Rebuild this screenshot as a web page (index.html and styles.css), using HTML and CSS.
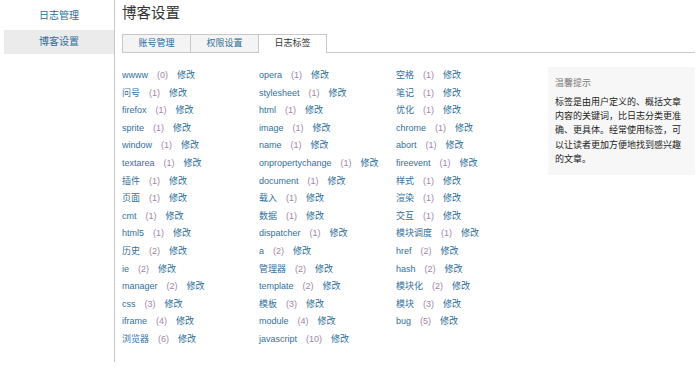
FILE: index.html
```html
<!DOCTYPE html>
<html lang="zh-CN">
<head>
  <meta charset="UTF-8" />
  <title>博客设置</title>
  <link rel="stylesheet" href="styles.css">
</head>
<body>
  <div class="page">
    <div class="side-nav">
      <a class="nav-item">日志管理</a>
      <a class="nav-item active">博客设置</a>
    </div>

    <div class="main">
      <h1 class="page-title">博客设置</h1>

      <div class="tabs">
        <a class="tab">账号管理</a>
        <a class="tab">权限设置</a>
        <a class="tab active">日志标签</a>
      </div>

      <div class="tag-panel">
        <ul class="tag-list">
          <li><span class="tag-name">wwww</span><span class="tag-count">(0)</span><a class="tag-edit">修改</a></li>
          <li><span class="tag-name">opera</span><span class="tag-count">(1)</span><a class="tag-edit">修改</a></li>
          <li><span class="tag-name">空格</span><span class="tag-count">(1)</span><a class="tag-edit">修改</a></li>
          <li><span class="tag-name">问号</span><span class="tag-count">(1)</span><a class="tag-edit">修改</a></li>
          <li><span class="tag-name">stylesheet</span><span class="tag-count">(1)</span><a class="tag-edit">修改</a></li>
          <li><span class="tag-name">笔记</span><span class="tag-count">(1)</span><a class="tag-edit">修改</a></li>
          <li><span class="tag-name">firefox</span><span class="tag-count">(1)</span><a class="tag-edit">修改</a></li>
          <li><span class="tag-name">html</span><span class="tag-count">(1)</span><a class="tag-edit">修改</a></li>
          <li><span class="tag-name">优化</span><span class="tag-count">(1)</span><a class="tag-edit">修改</a></li>
          <li><span class="tag-name">sprite</span><span class="tag-count">(1)</span><a class="tag-edit">修改</a></li>
          <li><span class="tag-name">image</span><span class="tag-count">(1)</span><a class="tag-edit">修改</a></li>
          <li><span class="tag-name">chrome</span><span class="tag-count">(1)</span><a class="tag-edit">修改</a></li>
          <li><span class="tag-name">window</span><span class="tag-count">(1)</span><a class="tag-edit">修改</a></li>
          <li><span class="tag-name">name</span><span class="tag-count">(1)</span><a class="tag-edit">修改</a></li>
          <li><span class="tag-name">abort</span><span class="tag-count">(1)</span><a class="tag-edit">修改</a></li>
          <li><span class="tag-name">textarea</span><span class="tag-count">(1)</span><a class="tag-edit">修改</a></li>
          <li><span class="tag-name">onpropertychange</span><span class="tag-count">(1)</span><a class="tag-edit">修改</a></li>
          <li><span class="tag-name">fireevent</span><span class="tag-count">(1)</span><a class="tag-edit">修改</a></li>
          <li><span class="tag-name">插件</span><span class="tag-count">(1)</span><a class="tag-edit">修改</a></li>
          <li><span class="tag-name">document</span><span class="tag-count">(1)</span><a class="tag-edit">修改</a></li>
          <li><span class="tag-name">样式</span><span class="tag-count">(1)</span><a class="tag-edit">修改</a></li>
          <li><span class="tag-name">页面</span><span class="tag-count">(1)</span><a class="tag-edit">修改</a></li>
          <li><span class="tag-name">载入</span><span class="tag-count">(1)</span><a class="tag-edit">修改</a></li>
          <li><span class="tag-name">渲染</span><span class="tag-count">(1)</span><a class="tag-edit">修改</a></li>
          <li><span class="tag-name">cmt</span><span class="tag-count">(1)</span><a class="tag-edit">修改</a></li>
          <li><span class="tag-name">数据</span><span class="tag-count">(1)</span><a class="tag-edit">修改</a></li>
          <li><span class="tag-name">交互</span><span class="tag-count">(1)</span><a class="tag-edit">修改</a></li>
          <li><span class="tag-name">html5</span><span class="tag-count">(1)</span><a class="tag-edit">修改</a></li>
          <li><span class="tag-name">dispatcher</span><span class="tag-count">(1)</span><a class="tag-edit">修改</a></li>
          <li><span class="tag-name">模块调度</span><span class="tag-count">(1)</span><a class="tag-edit">修改</a></li>
          <li><span class="tag-name">历史</span><span class="tag-count">(2)</span><a class="tag-edit">修改</a></li>
          <li><span class="tag-name">a</span><span class="tag-count">(2)</span><a class="tag-edit">修改</a></li>
          <li><span class="tag-name">href</span><span class="tag-count">(2)</span><a class="tag-edit">修改</a></li>
          <li><span class="tag-name">ie</span><span class="tag-count">(2)</span><a class="tag-edit">修改</a></li>
          <li><span class="tag-name">管理器</span><span class="tag-count">(2)</span><a class="tag-edit">修改</a></li>
          <li><span class="tag-name">hash</span><span class="tag-count">(2)</span><a class="tag-edit">修改</a></li>
          <li><span class="tag-name">manager</span><span class="tag-count">(2)</span><a class="tag-edit">修改</a></li>
          <li><span class="tag-name">template</span><span class="tag-count">(2)</span><a class="tag-edit">修改</a></li>
          <li><span class="tag-name">模块化</span><span class="tag-count">(2)</span><a class="tag-edit">修改</a></li>
          <li><span class="tag-name">css</span><span class="tag-count">(3)</span><a class="tag-edit">修改</a></li>
          <li><span class="tag-name">模板</span><span class="tag-count">(3)</span><a class="tag-edit">修改</a></li>
          <li><span class="tag-name">模块</span><span class="tag-count">(3)</span><a class="tag-edit">修改</a></li>
          <li><span class="tag-name">iframe</span><span class="tag-count">(4)</span><a class="tag-edit">修改</a></li>
          <li><span class="tag-name">module</span><span class="tag-count">(4)</span><a class="tag-edit">修改</a></li>
          <li><span class="tag-name">bug</span><span class="tag-count">(5)</span><a class="tag-edit">修改</a></li>
          <li><span class="tag-name">浏览器</span><span class="tag-count">(6)</span><a class="tag-edit">修改</a></li>
          <li><span class="tag-name">javascript</span><span class="tag-count">(10)</span><a class="tag-edit">修改</a></li>
        </ul>

        <div class="tip-box">
          <div class="tip-title">温馨提示</div>
          <p class="tip-text">标签是由用户定义的、概括文章内容的关键词，比日志分类更准确、更具体。经常使用标签，可以让读者更加方便地找到感兴趣的文章。</p>
        </div>
      </div>
    </div>
  </div>
</body>
</html>
```

FILE: styles.css
```css
body {
  margin: 0;
  font-family: 'Liberation Sans', 'Noto Sans CJK SC', sans-serif;
  font-size: 9px;
  color: #333;
  background: #fff;
}

a {
  cursor: pointer;
}

.page {
  display: flex;
  height: 362px;
}

/* 左侧导航 */
.side-nav {
  width: 110px;
  padding: 4px 0 0 4px;
  border-right: 1px solid #c8c8c8;
  display: flex;
  flex-direction: column;
  gap: 2px;
}

.nav-item {
  display: block;
  height: 24px;
  line-height: 24px;
  text-align: center;
  font-size: 10px;
  color: #2b6d99;
}

.nav-item.active {
  background: #ebebeb;
}

/* 主区域 */
.main {
  flex: 1;
  padding: 0 5px 0 7px;
}

.page-title {
  margin: 3px 0 0;
  font-size: 14.5px;
  line-height: 20px;
  font-weight: normal;
  color: #333;
}

.tabs {
  display: flex;
  margin-top: 11px;
  border-bottom: 1px solid #c8c8c8;
}

.tab {
  width: 67px;
  height: 17px;
  line-height: 17px;
  text-align: center;
  color: #2b6d99;
  background: #f4f4f4;
  border: 1px solid #c8c8c8;
  border-left: none;
  border-bottom: none;
}

.tab:first-child {
  border-left: 1px solid #c8c8c8;
}

.tab.active {
  background: #fff;
  color: #333;
  height: 18px;
  margin-bottom: -1px;
}

.tag-panel {
  display: flex;
  align-items: flex-start;
  margin-top: 14px;
}

.tag-list {
  list-style: none;
  margin: 0;
  padding: 0;
  width: 411px;
  display: grid;
  grid-template-columns: repeat(3, 137px);
}

.tag-list li {
  line-height: 17.6px;
  white-space: nowrap;
}

.tag-name {
  color: #33709e;
}

.tag-count {
  color: #a286a8;
  margin-left: 9px;
}

.tag-edit {
  color: #2b6d99;
  margin-left: 9px;
}

/* 温馨提示 */
.tip-box {
  margin-left: auto;
  width: 133px;
  padding: 9px 7px 9px 7px;
  background: #f7f7f7;
}

.tip-title {
  line-height: 14px;
  color: #7a7a7a;
}

.tip-text {
  margin: 5px 0 0;
  line-height: 14.2px;
  color: #222;
}
```
